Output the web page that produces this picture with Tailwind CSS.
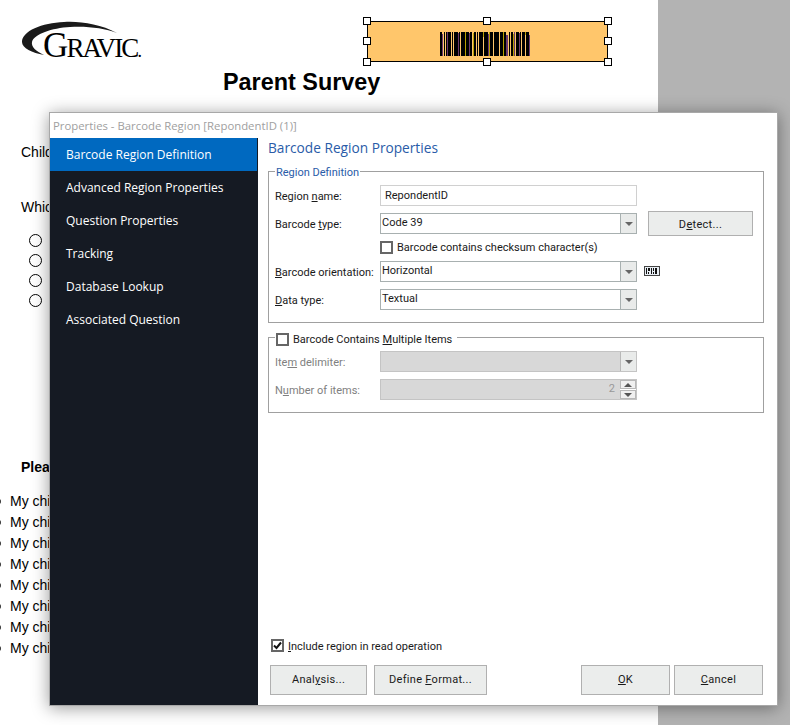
<!DOCTYPE html>
<html lang="en">
<head>
  <meta charset="utf-8" />
  <title>Barcode Region Properties</title>
  <script src="https://cdn.jsdelivr.net/npm/@tailwindcss/browser@4"></script>
</head>
<body class="bg-[#b3b3b3] overflow-hidden">
  <div class="relative w-[790px] h-[725px] overflow-hidden">

    <!-- Survey page behind the dialog -->
    <div class="w-[658px] h-[725px] bg-white text-black font-['Liberation_Sans',Arial,sans-serif] overflow-hidden">
      <div class="flex h-[62px] pt-[22px]">
        <div class="relative w-[345px] ml-[22px] h-[37px]">
          <svg class="absolute left-0 top-[-1px]" width="96" height="36" viewBox="0 0 96 36">
            <path d="M95 12C78 3 58 0 42 1 20 2 0 10 0 21c0 6 10 11 22 13-8-4-13-8-12-13C12 13 30 7 48 6c17-1 34 1 47 6Z" fill="#1a1a1a" />
          </svg>
          <span class="absolute left-[21px] top-[3px] font-['Liberation_Serif',serif] text-[35px] leading-[42px] tracking-[-1.9px] whitespace-nowrap">G<span class="text-[27px]">RAVIC</span><span class="text-[18px]">.</span></span>
        </div>
        <div class="relative w-[241px] h-[41px] mt-[-1px] bg-[#ffc66b] border border-black flex items-center justify-center">
          <svg class="mr-[6px] mt-[4px]" width="90" height="24" viewBox="0 0 90 24" shape-rendering="crispEdges">
            <path fill="#000" d="M0 0h2v24H0zM4 0h1v24H4zM6 0h1v24H6zM8 0h3v24H8zM12 0h1v24h-1zM14 0h4v24h-4zM19 0h1v24h-1zM21 0h4v24h-4zM26 0h3v24h-3zM30 0h2v24h-2zM34 0h2v24h-2zM37 0h1v24h-1zM39 0h4v24h-4zM44 0h4v24h-4zM50 0h3v24h-3zM54 0h5v24h-5zM60 0h3v24h-3zM64 0h2v24h-2zM69 0h1v24h-1zM71 0h2v24h-2zM76 0h3v24h-3zM80 0h1v24h-1zM82 0h3v24h-3zM86 0h3v24h-3z" />
            <path fill="#6b3a6b" d="M2 2h1v22H2zM7 0h1v24H7zM18 1h1v23h-1zM29 1h1v23h-1zM48 2h1v22h-1zM66 3h2v21h-2zM74 0h1v24h-1zM79 1h1v23h-1zM89 3h1v21h-1z" />
            <path fill="#b8a000" d="M25 0h1v24h-1zM33 1h1v23h-1zM43 0h1v5h-1zM49 0h1v24h-1zM63 0h1v24h-1zM73 2h1v22h-1zM85 0h1v3h-1z" />
          </svg>
          <span class="absolute left-[-5px] top-[-5px] w-2 h-2 bg-white border border-black"></span>
          <span class="absolute left-[115px] top-[-5px] w-2 h-2 bg-white border border-black"></span>
          <span class="absolute right-[-5px] top-[-5px] w-2 h-2 bg-white border border-black"></span>
          <span class="absolute left-[-5px] top-[15px] w-2 h-2 bg-white border border-black"></span>
          <span class="absolute right-[-5px] top-[15px] w-2 h-2 bg-white border border-black"></span>
          <span class="absolute left-[-5px] bottom-[-5px] w-2 h-2 bg-white border border-black"></span>
          <span class="absolute left-[115px] bottom-[-5px] w-2 h-2 bg-white border border-black"></span>
          <span class="absolute right-[-5px] bottom-[-5px] w-2 h-2 bg-white border border-black"></span>
        </div>
      </div>
      <h1 class="ml-[223px] mt-[5px] text-[23.4px] leading-[30px] font-bold">Parent Survey</h1>
      <p class="ml-[21px] mt-[47px] text-[14px] leading-[16px]">Child</p>
      <p class="ml-[21px] mt-[39px] text-[14px] leading-[16px]">Which</p>
      <div class="ml-[29px] mt-[19px] flex flex-col gap-[7px]">
        <span class="block w-[13px] h-[13px] rounded-full border border-black"></span>
        <span class="block w-[13px] h-[13px] rounded-full border border-black"></span>
        <span class="block w-[13px] h-[13px] rounded-full border border-black"></span>
        <span class="block w-[13px] h-[13px] rounded-full border border-black"></span>
      </div>
      <p class="ml-[21px] mt-[152px] text-[14px] leading-[16px] font-bold">Please</p>
      <ul class="ml-[-6px] mt-[16px] text-[14px] leading-[21px]">
        <li class="flex items-center gap-[9px]"><span class="w-[7px] h-[7px] rounded-full border border-black"></span>My child</li>
        <li class="flex items-center gap-[9px]"><span class="w-[7px] h-[7px] rounded-full border border-black"></span>My child</li>
        <li class="flex items-center gap-[9px]"><span class="w-[7px] h-[7px] rounded-full border border-black"></span>My child</li>
        <li class="flex items-center gap-[9px]"><span class="w-[7px] h-[7px] rounded-full border border-black"></span>My child</li>
        <li class="flex items-center gap-[9px]"><span class="w-[7px] h-[7px] rounded-full border border-black"></span>My child</li>
        <li class="flex items-center gap-[9px]"><span class="w-[7px] h-[7px] rounded-full border border-black"></span>My child</li>
        <li class="flex items-center gap-[9px]"><span class="w-[7px] h-[7px] rounded-full border border-black"></span>My child</li>
        <li class="flex items-center gap-[9px]"><span class="w-[7px] h-[7px] rounded-full border border-black"></span>My child</li>
      </ul>
    </div>

    <!-- Properties dialog -->
    <div class="absolute left-[49px] top-[112px] w-[729px] h-[594px] bg-white border border-[#a8a8a8] shadow-[0_2px_16px_rgba(0,0,0,0.4)] flex flex-col font-['Roboto',sans-serif] text-[11px] text-[#1a1a1a]">
      <div class="h-[25px] shrink-0 pl-[3px] flex items-center font-['Open_Sans',sans-serif] text-[11.35px] text-[#a0a0a0]">Properties - Barcode Region [RepondentID (1)]</div>
      <div class="flex flex-1 min-h-0">
        <nav class="w-[208px] shrink-0 bg-[#151a23] text-white font-['Open_Sans',sans-serif] text-[12px] pr-px">
          <div class="h-[33px] pl-4 flex items-center bg-[#0069c0]">Barcode Region Definition</div>
          <div class="h-[33px] pl-4 flex items-center">Advanced Region Properties</div>
          <div class="h-[33px] pl-4 flex items-center">Question Properties</div>
          <div class="h-[33px] pl-4 flex items-center">Tracking</div>
          <div class="h-[33px] pl-4 flex items-center">Database Lookup</div>
          <div class="h-[33px] pl-4 flex items-center">Associated Question</div>
        </nav>

        <main class="flex-1 min-w-0 pl-[10px] pr-[13px] flex flex-col">
          <h2 class="h-[20px] mb-[13px] font-['Open_Sans',sans-serif] text-[13.7px] leading-[20px] text-[#2a5ca8]">Barcode Region Properties</h2>

          <!-- Region Definition group -->
          <div class="relative h-[152px] border border-[#a0a0a0] pl-[6px] pt-[13px]">
            <span class="absolute left-[6px] top-[-7px] px-px bg-white text-[#2a5ca8] leading-[16px]">Region Definition</span>
            <div class="flex items-center h-[21px]">
              <label class="w-[105px] mt-[4px] whitespace-nowrap">Region <u>n</u>ame:</label>
              <div class="w-[257px] h-[21px] border border-[#d0d0d0] pl-[4px] leading-[20px]">RepondentID</div>
            </div>
            <div class="flex items-center h-[21px] mt-[7px] relative">
              <label class="w-[105px] mt-[4px] whitespace-nowrap">Barcode <u>t</u>ype:</label>
              <div class="w-[257px] h-[21px] border border-[#a8b0b0] pl-px leading-[18px] flex justify-between">Code 39
                <span class="w-[16px] h-[19px] bg-[#e9ebea] border-l border-[#a8b0b0] flex items-center justify-center"><span class="border-x-[4px] border-x-transparent border-t-[4px] border-t-[#666]"></span></span>
              </div>
              <button class="absolute left-[373px] top-[-2px] w-[105px] h-[25px] pt-[3px] bg-[#ebedec] border border-[#b0b0b0] tracking-[0.3px]">D<u>e</u>tect...</button>
            </div>
            <div class="flex items-center h-[13px] mt-[7px] ml-[105px] gap-[4px]">
              <span class="w-[13px] h-[13px] border-2 border-[#666]"></span>
              <span class="mt-[2px]">Barcode contains checksum character(s)</span>
            </div>
            <div class="flex items-center h-[21px] mt-[7px] relative">
              <label class="w-[105px] mt-[4px] whitespace-nowrap"><u>B</u>arcode orientation:</label>
              <div class="w-[257px] h-[21px] border border-[#a8b0b0] pl-px leading-[18px] flex justify-between">Horizontal
                <span class="w-[16px] h-[19px] bg-[#e9ebea] border-l border-[#a8b0b0] flex items-center justify-center"><span class="border-x-[4px] border-x-transparent border-t-[4px] border-t-[#666]"></span></span>
              </div>
              <svg class="absolute left-[369px] top-[5px]" width="16" height="10" viewBox="0 0 16 10" shape-rendering="crispEdges">
                <rect x="0.5" y="0.5" width="15" height="9" fill="#e8eef4" stroke="#444" />
                <path fill="#111" d="M2 2h1v6H2zM4 2h2v3H4zM7 2h1v6H7zM9 2h1v3H9zM9 6h1v2H9zM11 2h2v6h-2zM4 6h1v2H4z" />
              </svg>
            </div>
            <div class="flex items-center h-[21px] mt-[7px]">
              <label class="w-[105px] mt-[4px] whitespace-nowrap"><u>D</u>ata type:</label>
              <div class="w-[257px] h-[21px] border border-[#a8b0b0] pl-px leading-[18px] flex justify-between">Textual
                <span class="w-[16px] h-[19px] bg-[#e9ebea] border-l border-[#a8b0b0] flex items-center justify-center"><span class="border-x-[4px] border-x-transparent border-t-[4px] border-t-[#666]"></span></span>
              </div>
            </div>
          </div>

          <!-- Multiple items group -->
          <div class="relative h-[76px] mt-[14px] border border-[#a0a0a0] pl-[6px] pt-[13px] text-[#808080]">
            <div class="absolute left-[6px] top-[-7px] px-px bg-white text-[#1a1a1a] flex items-center gap-[4px] pr-[5px]">
              <span class="w-[13px] h-[13px] border-2 border-[#666]"></span>
              <span class="mt-[2px] leading-[14px]">Barcode Contains <u>M</u>ultiple Items</span>
            </div>
            <div class="flex items-center h-[21px]">
              <label class="w-[105px] mt-[4px] whitespace-nowrap">Ite<u>m</u> delimiter:</label>
              <div class="w-[257px] h-[21px] bg-[#d8d8d8] border border-[#c4c4c4] flex justify-end">
                <span class="w-[16px] h-[19px] bg-[#e9ebea] border-l border-[#b8b8b8] flex items-center justify-center"><span class="border-x-[4px] border-x-transparent border-t-[4px] border-t-[#666]"></span></span>
              </div>
            </div>
            <div class="flex items-center h-[21px] mt-[7px]">
              <label class="w-[105px] mt-[4px] whitespace-nowrap">N<u>u</u>mber of items:</label>
              <div class="w-[257px] h-[21px] bg-[#d8d8d8] border border-[#c4c4c4] flex justify-end items-center">
                <span class="pr-[5px] text-[#999]">2</span>
                <span class="w-[16px] h-[19px] bg-white flex flex-col gap-px">
                  <span class="flex-1 bg-[#f0f0f0] border border-[#b8b8b8] flex items-center justify-center"><span class="border-x-[4px] border-x-transparent border-b-[4px] border-b-[#555]"></span></span>
                  <span class="flex-1 bg-[#f0f0f0] border border-[#b8b8b8] flex items-center justify-center"><span class="border-x-[4px] border-x-transparent border-t-[4px] border-t-[#555]"></span></span>
                </span>
              </div>
            </div>
          </div>

          <!-- Footer -->
          <div class="mt-auto pb-[10px]">
            <div class="flex items-center h-[13px] ml-[3px] gap-[4px] mb-[13px]">
              <span class="w-[13px] h-[13px] border-2 border-[#666] flex items-center justify-center">
                <svg width="9" height="9" viewBox="0 0 9 9"><path d="M1 4.5 3.5 7 8 1.5" fill="none" stroke="#111" stroke-width="2" /></svg>
              </span>
              <span class="mt-[4px]"><u>I</u>nclude region in read operation</span>
            </div>
            <div class="flex ml-[2px] mr-px tracking-[0.3px]">
              <button class="w-[97px] h-[30px] pt-px bg-[#ebedec] border border-[#b0b0b0]">Anal<u>y</u>sis...</button>
              <button class="w-[113px] h-[30px] pt-px ml-[7px] bg-[#ebedec] border border-[#b0b0b0]">Define <u>F</u>ormat...</button>
              <button class="w-[89px] h-[30px] pt-px ml-auto bg-[#ebedec] border border-[#b0b0b0]"><u>O</u>K</button>
              <button class="w-[89px] h-[30px] pt-px ml-[4px] bg-[#ebedec] border border-[#b0b0b0]"><u>C</u>ancel</button>
            </div>
          </div>
        </main>
      </div>
    </div>
  </div>
</body>
</html>
